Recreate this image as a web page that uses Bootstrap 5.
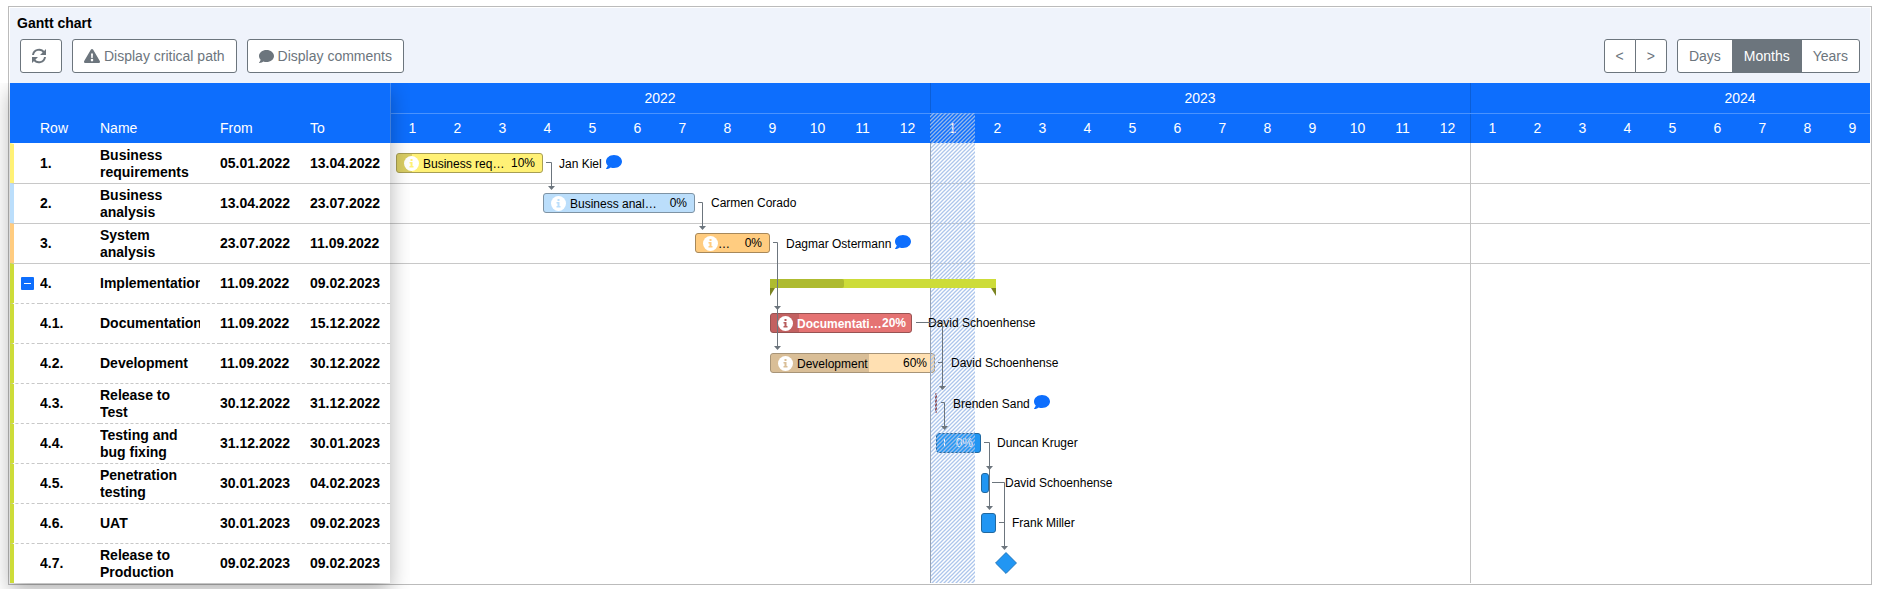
<!DOCTYPE html>
<html lang="en">
<head>
<meta charset="utf-8">
<meta name="viewport" content="width=device-width, initial-scale=1">
<title>Gantt chart</title>
<link href="https://cdn.jsdelivr.net/npm/bootstrap@5.3.0/dist/css/bootstrap.min.css" rel="stylesheet">
<style>
  body { font-family: "Liberation Sans", Arial, sans-serif; font-size: 14px; color: #000; padding: 6px 7px 4px 8px; }
  .gantt { border: 1px solid #bbb; padding: 1px; }
  .gantt-top { background: #eff3fb; padding: 5px 10px 10px; }
  .gantt-top h1 { font-size: 14px; line-height: 20px; font-weight: 700; margin: 0 -3px 6px; }
  .gantt-top .btn { --bs-btn-font-size: 14px; --bs-btn-line-height: 20px; --bs-btn-bg: #fff; --bs-btn-padding-x: 11px; --bs-btn-padding-y: 6px; --bs-btn-border-radius: 3px; --bs-btn-active-bg: #6c757d; height: 34px; }
  .gantt-top .btn.refresh { --bs-btn-padding-x: 10px; }
  .gantt-top .btn svg { fill: currentColor; display: block; }
  .tools { gap: 10px; }
  .tasks { width: 380px; box-shadow: 0 8px 20px rgba(0,0,0,.3); clip-path: inset(0 -20px -6px -10px); z-index: 2; }
  .tasks table { table-layout: fixed; width: 380px; line-height: 17px; border-collapse: separate; border-spacing: 0; background: #fff; }
  .tasks th, .tasks td { height: 40px; padding: 0; vertical-align: middle; border: 0 solid #c8c8c8; border-top-width: 1px; font-weight: 700; overflow: hidden; }
  .tasks thead th { height: 60px; background: #0d6efd; color: #fff; font-weight: 400; vertical-align: bottom; padding-bottom: 6px; border: 0; }
  .tasks tbody tr:first-child td { border-top-color: transparent; }
  .tasks tr.sub td { border-top-style: dashed; }
  .tasks td:first-child { border-left: 4px solid var(--c); }
  .clip { width: 100px; overflow: hidden; }
  .fold { width: 13px; height: 13px; border: 0; border-radius: 1px; background: #0d6efd; padding: 0 3px; margin-left: 7px; display: flex; align-items: center; }
  .fold::before { content: ""; height: 1px; width: 7px; background: #fff; }
  .chart { min-width: 0; overflow: hidden; }
  .scale { background: #0d6efd; color: #fff; }
  .year { width: 540px; flex: none; text-align: center; border-left: 1px solid #0b5ed7; }
  .year:first-child { border-left-color: #4a93fe; }
  .year b { display: block; font-weight: 400; height: 30px; line-height: 30px; margin-left: -1px; }
  .months { display: grid; grid-template-columns: repeat(12, 45px); border-top: 1px solid #4a93fe; height: 30px; line-height: 29px; margin-left: -1px; }
  .plot { height: 440px; font-size: 12px; line-height: 16px; }
  .lane { height: 40px; padding-top: 10px; white-space: nowrap; display: flex; }
  .lane.ruled { box-shadow: inset 0 1px #c8c8c8; }
  .tbar { flex: none; height: 20px; border: 1px solid color-mix(in srgb, var(--c) 60%, #222); border-radius: 3px; background: var(--c); display: flex; align-items: center; padding: 0 7px; overflow: hidden; position: relative; }
  .done { position: absolute; left: 0; top: 0; bottom: 0; background: rgba(0,0,0,.15); }
  .dot { flex: none; width: 15px; height: 15px; position: relative; }
  .caption { flex: 1; min-width: 0; overflow: hidden; text-overflow: ellipsis; margin: 1px 2px 0 4px; position: relative; }
  .tight .caption { margin: 1px 0 0; }
  .tbar.fw-bold { padding-right: 5px; }
  .fw-bold .caption { margin-right: 0; }
  .pct { position: relative; flex: none; min-width: 25px; text-align: right; }
  .fw-bold .pct { min-width: 24px; }
  .tick { width: 1px; height: 8px; background: #fff; }
  .mini { padding: 0; }
  .who { margin: 2px 4px 0 16px; position: relative; z-index: 2; }
  .who.talk { margin-top: 3px; }
  .bub { width: 16px; height: 14px; fill: #0d6efd; margin-top: 2px; }
  .summary { margin-top: 6px; flex: none; position: relative; z-index: 2; background: #cddc39; height: 9px; }
  .summary::before, .summary::after { content: ""; position: absolute; top: 9px; width: 5px; height: 8px; background: #7b8421; }
  .summary::before { left: 0; clip-path: polygon(0 0, 100% 0, 0 100%); }
  .summary::after { right: 0; clip-path: polygon(0 0, 100% 0, 100% 100%); }
  .summary .done { border-radius: 0 2px 2px 0; }
  .over { position: absolute; left: 0; top: 0; pointer-events: none; z-index: 3; }
  .today { position: absolute; left: 540px; top: 30px; bottom: 0; width: 45px; pointer-events: none; z-index: 1; }
  .rule { position: absolute; top: 60px; bottom: 0; width: 1px; background: #c2c2c2; z-index: 1; }
  .rule.now { background: #98a3b3; }
</style>
</head>
<body>
<svg class="d-none" aria-hidden="true">
  <symbol id="bubble" viewBox="0 0 512 448" preserveAspectRatio="none"><path d="M256 0C115 0 0 93 0 208c0 50 21 95 57 131-13 50-54 94-55 95-3 3-3 6-2 9 2 4 5 5 8 5 66 0 116-32 140-51 33 12 69 19 108 19 141 0 256-93 256-208S397 0 256 0z"/></symbol>
  <symbol id="info" viewBox="0 0 15 15"><circle cx="7.500" cy="7.500" r="7.500" fill="#fff"/><path fill="currentColor" d="M6.500 3h2v2h-2zM5.500 6h3v4h1v1.500h-4V10h1V7.500h-1z"/></symbol>
</svg>
<main class="gantt">
  <header class="gantt-top">
    <h1>Gantt chart</h1>
    <div class="d-flex justify-content-between">
      <div class="tools d-flex">
        <button class="btn btn-outline-secondary refresh" type="button" aria-label="Refresh"><svg class="me-1" width="16" height="16" viewBox="0 0 16 16"><g fill="none" stroke="currentColor" stroke-width="2"><path d="M2 7a6 6 0 0 1 11-2.500M14 9a6 6 0 0 1-11 2.500"/></g><path d="M15 1v6H9zM1 15V9h6z"/></svg></button>
        <button class="btn btn-outline-secondary d-flex align-items-center" type="button"><svg class="me-1" width="16" height="14" viewBox="0 0 16 14"><path fill-rule="evenodd" d="M8 0c.5 0 1 .2 1.200.7l6.600 11.300c.5.900-.1 2-1.200 2H1.400C.3 14-.3 12.900.2 12L6.800.7C7 .2 7.500 0 8 0zM7 4.500l.3 4.500h1.400L9 4.500zM8 9.800a1.300 1.300 0 1 0 0 2.600 1.300 1.300 0 0 0 0-2.600z"/></svg>Display critical path</button>
        <button class="btn btn-outline-secondary d-flex align-items-center" type="button"><svg class="me-1" width="15" height="13"><use href="#bubble"/></svg>Display comments</button>
      </div>
      <div class="tools d-flex">
        <div class="btn-group"><button class="btn btn-outline-secondary" type="button">&lt;</button><button class="btn btn-outline-secondary" type="button">&gt;</button></div>
        <div class="btn-group"><button class="btn btn-outline-secondary" type="button">Days</button><button class="btn btn-outline-secondary active" type="button">Months</button><button class="btn btn-outline-secondary" type="button">Years</button></div>
      </div>
    </div>
  </header>
  <div class="d-flex">
    <div class="tasks position-relative flex-shrink-0">
      <table>
        <colgroup><col style="width:30px"><col style="width:60px"><col style="width:120px"><col style="width:90px"><col style="width:80px"></colgroup>
        <thead><tr><th></th><th>Row</th><th>Name</th><th>From</th><th>To</th></tr></thead>
        <tbody>
          <tr style="--c:#fff176"><td></td><td>1.</td><td><div class="clip">Business requirements</div></td><td>05.01.2022</td><td>13.04.2022</td></tr>
          <tr style="--c:#bbdefb"><td></td><td>2.</td><td><div class="clip">Business analysis</div></td><td>13.04.2022</td><td>23.07.2022</td></tr>
          <tr style="--c:#ffcc80"><td></td><td>3.</td><td><div class="clip">System analysis</div></td><td>23.07.2022</td><td>11.09.2022</td></tr>
          <tr style="--c:#cddc39"><td><button class="fold" type="button" aria-label="Collapse"></button></td><td>4.</td><td><div class="clip">Implementation</div></td><td>11.09.2022</td><td>09.02.2023</td></tr>
          <tr class="sub" style="--c:#cddc39"><td></td><td>4.1.</td><td><div class="clip">Documentation</div></td><td>11.09.2022</td><td>15.12.2022</td></tr>
          <tr class="sub" style="--c:#cddc39"><td></td><td>4.2.</td><td><div class="clip">Development</div></td><td>11.09.2022</td><td>30.12.2022</td></tr>
          <tr class="sub" style="--c:#cddc39"><td></td><td>4.3.</td><td><div class="clip">Release to Test</div></td><td>30.12.2022</td><td>31.12.2022</td></tr>
          <tr class="sub" style="--c:#cddc39"><td></td><td>4.4.</td><td><div class="clip">Testing and bug fixing</div></td><td>31.12.2022</td><td>30.01.2023</td></tr>
          <tr class="sub" style="--c:#cddc39"><td></td><td>4.5.</td><td><div class="clip">Penetration testing</div></td><td>30.01.2023</td><td>04.02.2023</td></tr>
          <tr class="sub" style="--c:#cddc39"><td></td><td>4.6.</td><td><div class="clip">UAT</div></td><td>30.01.2023</td><td>09.02.2023</td></tr>
          <tr class="sub" style="--c:#cddc39"><td></td><td>4.7.</td><td><div class="clip">Release to Production</div></td><td>09.02.2023</td><td>09.02.2023</td></tr>
        </tbody>
      </table>
    </div>
    <div class="chart flex-fill position-relative">
      <div class="scale d-flex">
        <div class="year"><b>2022</b><div class="months"><span>1</span><span>2</span><span>3</span><span>4</span><span>5</span><span>6</span><span>7</span><span>8</span><span>9</span><span>10</span><span>11</span><span>12</span></div></div>
        <div class="year"><b>2023</b><div class="months"><span>1</span><span>2</span><span>3</span><span>4</span><span>5</span><span>6</span><span>7</span><span>8</span><span>9</span><span>10</span><span>11</span><span>12</span></div></div>
        <div class="year"><b>2024</b><div class="months"><span>1</span><span>2</span><span>3</span><span>4</span><span>5</span><span>6</span><span>7</span><span>8</span><span>9</span></div></div>
      </div>
      <div class="plot position-relative">
        <div class="lane"><div class="tbar" style="--c:#fff176;margin-left:6px;width:147px"><i class="done" style="width:10%"></i><svg class="dot" style="color:#fff176"><use href="#info"/></svg><span class="caption">Business requirements</span><span class="pct">10%</span></div><span class="who talk">Jan Kiel</span><svg class="bub"><use href="#bubble"/></svg></div>
        <div class="lane ruled"><div class="tbar" style="--c:#bbdefb;margin-left:153px;width:152px"><svg class="dot" style="color:#bbdefb"><use href="#info"/></svg><span class="caption">Business analysis</span><span class="pct">0%</span></div><span class="who">Carmen Corado</span></div>
        <div class="lane ruled"><div class="tbar tight" style="--c:#ffcc80;margin-left:305px;width:75px"><svg class="dot" style="color:#ffcc80"><use href="#info"/></svg><span class="caption">&hellip;</span><span class="pct">0%</span></div><span class="who talk">Dagmar Ostermann</span><svg class="bub"><use href="#bubble"/></svg></div>
        <div class="lane ruled"><div class="summary" style="margin-left:380px;width:226px"><i class="done" style="width:74px"></i></div></div>
        <div class="lane"><div class="tbar text-white fw-bold" style="--c:#e57373;margin-left:380px;width:142px"><i class="done" style="width:20%"></i><svg class="dot" style="color:#b75c5c"><use href="#info"/></svg><span class="caption">Documentation</span><span class="pct">20%</span></div><span class="who">David Schoenhense</span></div>
        <div class="lane"><div class="tbar" style="--c:#ffe0b2;margin-left:380px;width:165px"><i class="done" style="width:60%"></i><svg class="dot" style="color:#d9be97"><use href="#info"/></svg><span class="caption">Development</span><span class="pct">60%</span></div><span class="who">David Schoenhense</span></div>
        <div class="lane"><div class="tbar mini" style="--c:#e57373;margin-left:545px;width:2px"></div><span class="who talk">Brenden Sand</span><svg class="bub"><use href="#bubble"/></svg></div>
        <div class="lane"><div class="tbar text-white justify-content-between" style="--c:#2196f3;margin-left:546px;width:45px"><i class="tick"></i><span class="pct">0%</span></div><span class="who">Duncan Kruger</span></div>
        <div class="lane"><div class="tbar mini" style="--c:#2196f3;margin-left:591px;width:8px"></div><span class="who">David Schoenhense</span></div>
        <div class="lane"><div class="tbar mini" style="--c:#2196f3;margin-left:591px;width:15px"></div><span class="who">Frank Miller</span></div>
        <div class="lane"><svg width="22" height="20" viewBox="0 0 22 22" overflow="visible" style="margin-left:605px"><path d="M11-.5 22.500 11 11 22.500-.5 11z" fill="#2196f3" stroke="#1b6fb5"/></svg></div>
        <svg class="over" width="700" height="440" aria-label="Task dependencies">
          <g fill="none" stroke="#6c757d">
            <path d="M156 19.500h5.500V44M308 59.500h4.500V84M383 99.500h4.500V204M526 179.500h26.500V244M548 219.500h4M551 259.500h3.500V284M594 299.500h5.500V364M602 339.500h12.500V404M609 379.500h5"/>
          </g>
          <path fill="#6c757d" d="M158 43h7l-3.500 4zM309 83h7l-3.500 4zM384 163h7l-3.500 4zM384 203h7l-3.500 4zM549 243h7l-3.500 4zM551 283h7l-3.500 4zM596 323h7l-3.500 4zM596 363h7l-3.500 4zM611 403h7l-3.500 4z"/>
        </svg>
      </div>
      <svg class="today" height="100%" aria-hidden="true"><defs><pattern id="hatch" width="4" height="4" patternUnits="userSpaceOnUse"><path d="M-1 1 1-1M0 4 4 0M3 5 5 3" stroke="#a4c0ea" stroke-opacity=".9" stroke-width="1.300"/></pattern></defs><rect width="45" height="470" fill="url(#hatch)"/></svg>
      <div class="rule now" style="left:540px"></div>
      <div class="rule" style="left:1080px"></div>
    </div>
  </div>
</main>
<script src="https://cdn.jsdelivr.net/npm/bootstrap@5.3.0/dist/js/bootstrap.bundle.min.js"></script>
</body>
</html>
